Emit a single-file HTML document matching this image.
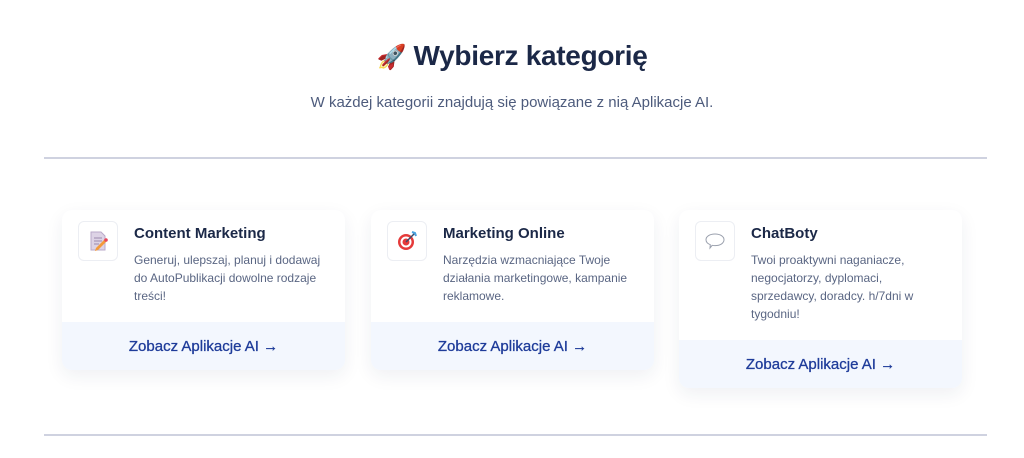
<!DOCTYPE html>
<html><head><meta charset="utf-8"><style>
*{margin:0;padding:0;box-sizing:border-box}
body{width:1024px;height:458px;background:#fff;font-family:"Liberation Sans",sans-serif;position:relative;overflow:hidden}
h1{position:absolute;top:40px;left:0;width:1024px;text-align:center;font-size:28px;font-weight:700;color:#1b2847;letter-spacing:-0.3px}
.sub{position:absolute;top:94px;left:0;width:1024px;text-align:center;font-size:15px;color:#4d5b7c}
.hr{position:absolute;left:44px;width:943px;height:2px;background:#cfd2e0}
.card{position:absolute;width:283px;background:#fff;border-radius:10px;box-shadow:0 6px 18px rgba(30,40,80,0.07);overflow:hidden}
.ic{position:absolute;left:16px;top:11px;width:40px;height:40px;border:1px solid #eceef3;border-radius:6px;display:flex;align-items:center;justify-content:center}
.t{position:absolute;left:72px;top:15px;font-size:15px;font-weight:700;color:#1b2847}
.d{position:absolute;left:72px;top:41px;width:200px;font-size:12px;line-height:18px;color:#5a6683}
.f{position:absolute;left:0;bottom:0;width:100%;height:48px;background:#f3f7fe;text-align:center;line-height:50px;font-size:15px;color:#1f3c9a;-webkit-text-stroke:0.3px #1f3c9a}
</style></head><body>
<h1><span style="font-size:24px">🚀</span> Wybierz kategorię</h1>
<div class="sub">W każdej kategorii znajdują się powiązane z nią Aplikacje AI.</div>
<div class="hr" style="top:157px"></div>
<div class="card" style="left:62px;top:210px;height:160px">
<div class="ic"><svg width="22" height="22" viewBox="0 0 22 22"><path d="M4 2h10l4 4v14H4z" fill="#ddd3e6" stroke="#b9a9c9"/><path d="M7 8h8M7 11h8M7 14h5" stroke="#9a8aad"/><path d="M9 18l9-9 2 2-9 9-3 1z" fill="#f39a3a"/><circle cx="19" cy="10" r="1.8" fill="#e8455a"/></svg></div>
<div class="t">Content Marketing</div>
<div class="d">Generuj, ulepszaj, planuj i dodawaj do AutoPublikacji dowolne rodzaje treści!</div>
<div class="f">Zobacz Aplikacje AI →</div></div>
<div class="card" style="left:371px;top:210px;height:160px">
<div class="ic"><svg width="22" height="22" viewBox="0 0 22 22"><circle cx="10" cy="12" r="8" fill="#e53a3a"/><circle cx="10" cy="12" r="5.5" fill="#fff"/><circle cx="10" cy="12" r="3.5" fill="#e53a3a"/><path d="M10 12L19 3" stroke="#3d4a6a" stroke-width="1.5"/><path d="M16 2l3 1 1 3" stroke="#4aa3e0" stroke-width="2" fill="none"/></svg></div>
<div class="t">Marketing Online</div>
<div class="d">Narzędzia wzmacniające Twoje działania marketingowe, kampanie reklamowe.</div>
<div class="f">Zobacz Aplikacje AI →</div></div>
<div class="card" style="left:679px;top:210px;height:178px">
<div class="ic"><svg width="24" height="20" viewBox="0 0 24 20"><path d="M12 3c5.5 0 9 2.6 9 5.8s-3.5 5.8-9 5.8c-1 0-2-.1-2.8-.3L7 17l.3-3.3C4.6 12.7 3 10.9 3 8.8 3 5.6 6.5 3 12 3z" fill="none" stroke="#9aa0ad" stroke-width="1"/></svg></div>
<div class="t">ChatBoty</div>
<div class="d">Twoi proaktywni naganiacze, negocjatorzy, dyplomaci, sprzedawcy, doradcy. h/7dni w tygodniu!</div>
<div class="f">Zobacz Aplikacje AI →</div></div>
<div class="hr" style="top:434px"></div>
</body></html>
